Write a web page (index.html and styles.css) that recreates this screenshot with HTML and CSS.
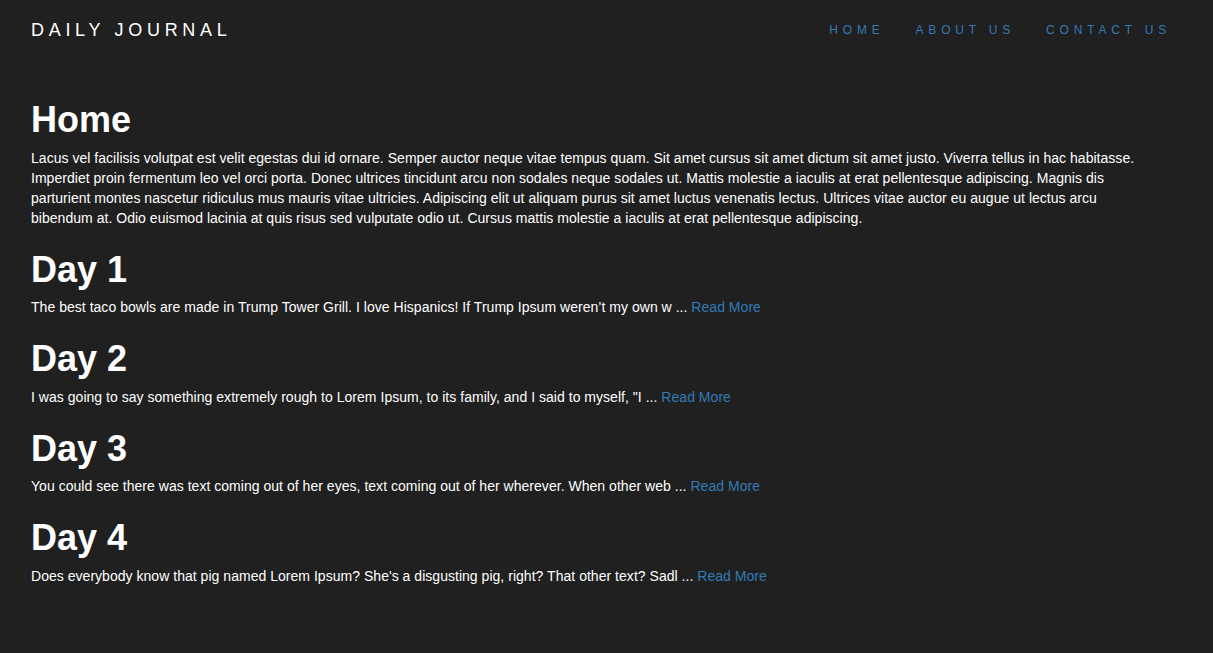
FILE: index.html
```html
<!DOCTYPE html>
<html lang="en">
<head>
<meta charset="utf-8">
<title>Daily Journal</title>
<link rel="stylesheet" href="styles.css">
</head>
<body>
<header class="navbar">
  <a class="brand" href="#">DAILY JOURNAL</a>
  <nav class="nav">
    <a href="#">HOME</a>
    <a href="#">ABOUT US</a>
    <a href="#">CONTACT US</a>
  </nav>
</header>
<main class="container">
  <section class="post">
    <h1>Home</h1>
    <p>Lacus vel facilisis volutpat est velit egestas dui id ornare. Semper auctor neque vitae tempus quam. Sit amet cursus sit amet dictum sit amet justo. Viverra tellus in hac habitasse. Imperdiet proin fermentum leo vel orci porta. Donec ultrices tincidunt arcu non sodales neque sodales ut. Mattis molestie a iaculis at erat pellentesque adipiscing. Magnis dis parturient montes nascetur ridiculus mus mauris vitae ultricies. Adipiscing elit ut aliquam purus sit amet luctus venenatis lectus. Ultrices vitae auctor eu augue ut lectus arcu bibendum at. Odio euismod lacinia at quis risus sed vulputate odio ut. Cursus mattis molestie a iaculis at erat pellentesque adipiscing.</p>
  </section>
  <section class="post">
    <h1>Day 1</h1>
    <p>The best taco bowls are made in Trump Tower Grill. I love Hispanics! If Trump Ipsum weren’t my own w ... <a href="#">Read More</a></p>
  </section>
  <section class="post">
    <h1>Day 2</h1>
    <p>I was going to say something extremely rough to Lorem Ipsum, to its family, and I said to myself, "I ... <a href="#">Read More</a></p>
  </section>
  <section class="post">
    <h1>Day 3</h1>
    <p>You could see there was text coming out of her eyes, text coming out of her wherever. When other web ... <a href="#">Read More</a></p>
  </section>
  <section class="post">
    <h1>Day 4</h1>
    <p>Does everybody know that pig named Lorem Ipsum? She's a disgusting pig, right? That other text? Sadl ... <a href="#">Read More</a></p>
  </section>
</main>
</body>
</html>
```

FILE: styles.css
```css
html, body {
  margin: 0;
  padding: 0;
}

body {
  background: #202020;
  color: #ffffff;
  font-family: "Helvetica Neue", "Liberation Sans", Arial, sans-serif;
  font-size: 14px;
  line-height: 20px;
  min-height: 653px;
}

a {
  color: #337ab7;
  text-decoration: none;
}

.navbar {
  display: flex;
  align-items: center;
  justify-content: space-between;
  height: 59px;
  padding: 0 42px 0 31px;
}

.brand {
  color: #ffffff;
  font-size: 18px;
  letter-spacing: 4.7px;
  line-height: 20px;
}

.nav {
  display: flex;
  gap: 31px;
}

.nav a {
  font-size: 12px;
  letter-spacing: 4.8px;
  line-height: 20px;
  color: #337ab7;
}

.container {
  padding: 19px 60px 40px 31px;
}

.post h1 {
  font-size: 36px;
  line-height: 1.1;
  font-weight: 700;
  margin: 20px 0 8px 0;
  padding-top: 2px;
}

.post p {
  margin: 0;
  letter-spacing: 0.03px;
}
```
